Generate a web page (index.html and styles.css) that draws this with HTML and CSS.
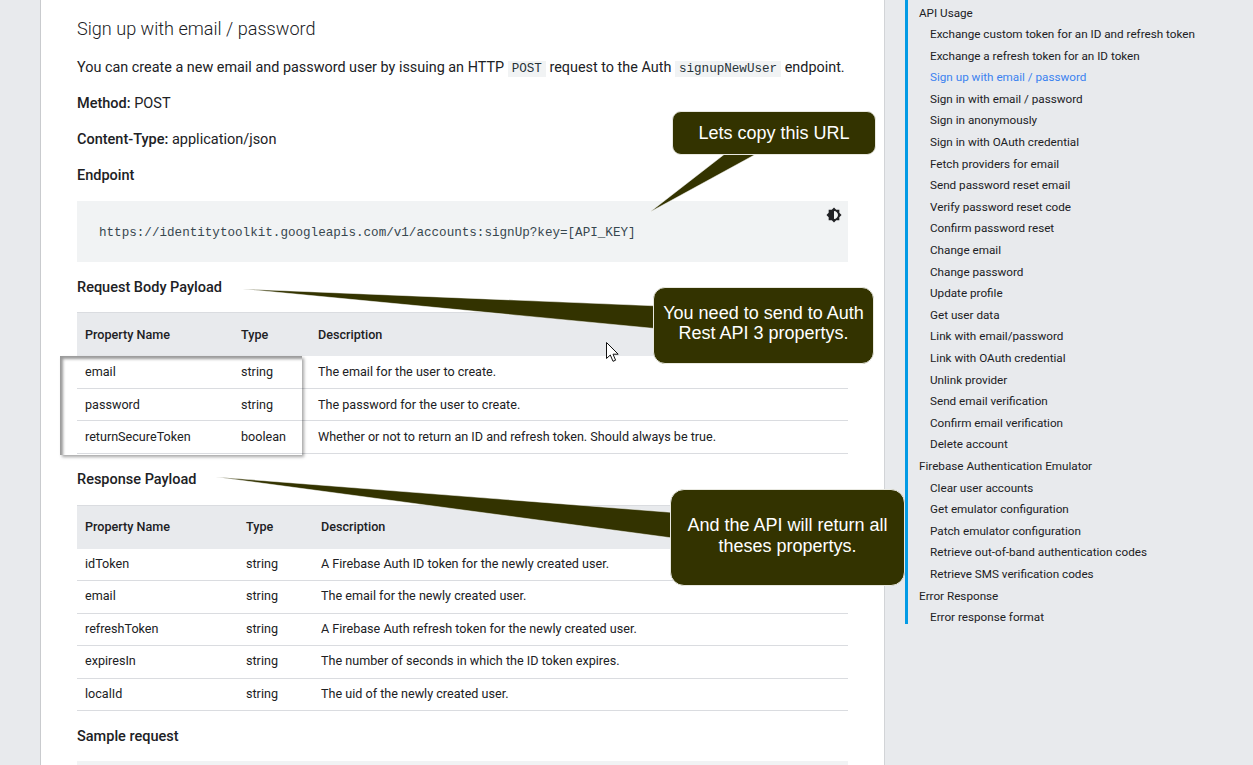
FILE: index.html
```html
<!DOCTYPE html>
<html lang="en">
<head>
  <meta charset="UTF-8" />
  <meta name="viewport" content="width=device-width, initial-scale=1.0" />
  <title>Firebase Auth REST API</title>
  <link rel="stylesheet" href="styles.css">
</head>
<body>
  <div class="page">
    <main class="card">
      <h3>Sign up with email / password</h3>
      <p class="intro">You can create a new email and password user by issuing an HTTP <code>POST</code> request to the Auth <code>signupNewUser</code> endpoint.</p>
      <p class="method"><b>Method:</b> POST</p>
      <p><b>Content-Type:</b> application/json</p>
      <p><b>Endpoint</b></p>
      <div class="code-block">
        <pre>https://identitytoolkit.googleapis.com/v1/accounts:signUp?key=[API_KEY]</pre>
        <svg class="theme-icon" viewBox="0 0 24 24"><path d="M20 15.31L23.31 12 20 8.69V4h-4.69L12 .69 8.69 4H4v4.69L.69 12 4 15.31V20h4.69L12 23.31 15.31 20H20v-4.69zM12 18V6c3.31 0 6 2.69 6 6s-2.69 6-6 6z"/></svg>
      </div>
      <p class="label"><b>Request Body Payload</b></p>
      <table class="request">
        <thead>
          <tr><th class="col-name">Property Name</th><th class="col-type">Type</th><th>Description</th></tr>
        </thead>
        <tbody>
          <tr><td>email</td><td>string</td><td>The email for the user to create.</td></tr>
          <tr><td>password</td><td>string</td><td>The password for the user to create.</td></tr>
          <tr><td>returnSecureToken</td><td>boolean</td><td>Whether or not to return an ID and refresh token. Should always be true.</td></tr>
        </tbody>
      </table>
      <p class="label"><b>Response Payload</b></p>
      <table class="response">
        <thead>
          <tr><th class="col-name">Property Name</th><th class="col-type">Type</th><th>Description</th></tr>
        </thead>
        <tbody>
          <tr><td>idToken</td><td>string</td><td>A Firebase Auth ID token for the newly created user.</td></tr>
          <tr><td>email</td><td>string</td><td>The email for the newly created user.</td></tr>
          <tr><td>refreshToken</td><td>string</td><td>A Firebase Auth refresh token for the newly created user.</td></tr>
          <tr><td>expiresIn</td><td>string</td><td>The number of seconds in which the ID token expires.</td></tr>
          <tr><td>localId</td><td>string</td><td>The uid of the newly created user.</td></tr>
        </tbody>
      </table>
      <p class="label"><b>Sample request</b></p>
      <div class="code-block sample"></div>
    </main>

    <nav class="toc">
      <a class="top">API Usage</a>
      <a>Exchange custom token for an ID and refresh token</a>
      <a>Exchange a refresh token for an ID token</a>
      <a class="current">Sign up with email / password</a>
      <a>Sign in with email / password</a>
      <a>Sign in anonymously</a>
      <a>Sign in with OAuth credential</a>
      <a>Fetch providers for email</a>
      <a>Send password reset email</a>
      <a>Verify password reset code</a>
      <a>Confirm password reset</a>
      <a>Change email</a>
      <a>Change password</a>
      <a>Update profile</a>
      <a>Get user data</a>
      <a>Link with email/password</a>
      <a>Link with OAuth credential</a>
      <a>Unlink provider</a>
      <a>Send email verification</a>
      <a>Confirm email verification</a>
      <a>Delete account</a>
      <a class="top">Firebase Authentication Emulator</a>
      <a>Clear user accounts</a>
      <a>Get emulator configuration</a>
      <a>Patch emulator configuration</a>
      <a>Retrieve out-of-band authentication codes</a>
      <a>Retrieve SMS verification codes</a>
      <a class="top">Error Response</a>
      <a>Error response format</a>
    </nav>
  </div>

  <!-- annotations drawn on top of the screenshot -->
  <div class="highlight"></div>
  <svg class="tails" viewBox="0 0 1253 765">
    <path d="M726 153 L758 153 L650 212 Z"/>
    <path d="M660 306 L243 289 L660 329 Z"/>
    <path d="M680 513 L216 477 L680 539 Z"/>
  </svg>
  <div class="callout c1">Lets copy this URL</div>
  <div class="callout c2">You need to send to Auth Rest API 3 propertys.</div>
  <div class="callout c3">And the API will return all theses propertys.</div>
  <svg class="cursor" viewBox="0 0 13 20"><path d="M.5.5V16.5L4.3 13 7 19.3 9.6 18.2 7 12.2H12.2Z"/></svg>
</body>
</html>
```

FILE: styles.css
```css
html, body {
  margin: 0;
  height: 765px;
  overflow: hidden;
}
body {
  position: relative;
  background: #e8eaed;
  color: #202124;
  font-family: Roboto, sans-serif;
  font-size: 14.4px;
}
.page {
  display: flex;
  align-items: flex-start;
}
.card {
  box-sizing: border-box;
  width: 845px;
  height: 765px;
  margin-left: 40px;
  padding: 0 36px;
  background: white;
  border-left: 1px solid #c9cbce;
  border-right: 1px solid #d2d4d7;
  overflow: hidden;
}
h3 {
  margin: 16px 0 0;
  font-size: 18.1px;
  line-height: 26px;
  font-weight: 300;
}
p {
  margin: 14px 0 0;
  font-size: 14.5px;
  line-height: 22px;
}
.intro {
  margin-top: 15px;
  font-size: 14.4px;
}
.method {
  margin-top: 13px;
}
b {
  font-weight: 500;
}
code {
  padding: 1px 4px;
  background: #f1f3f4;
  font-family: "Liberation Mono", monospace;
  font-size: 12.6px;
  color: #263238;
}
.code-block {
  position: relative;
  height: 61px;
  margin-top: 14px;
  background: #f1f3f4;
}
pre {
  margin: 0;
  padding: 23px 22px 0;
  font-family: "Liberation Mono", monospace;
  font-size: 12.6px;
  line-height: 18px;
  color: #37474f;
}
.theme-icon {
  position: absolute;
  top: 6px;
  right: 6px;
  width: 16px;
  height: 16px;
  fill: #202124;
}
.label {
  margin-top: 15px;
}
table {
  width: 100%;
  margin-top: 13px;
  border-collapse: collapse;
  table-layout: fixed;
  font-size: 12.6px;
}
th {
  height: 43px;
  padding: 0 8px;
  background: #e8eaed;
  border-top: 1px solid #dadce0;
  text-align: left;
  font-weight: 500;
}
td {
  height: 31.5px;
  padding: 0 8px;
  border-bottom: 1px solid #dadce0;
}
.response {
  margin-top: 14px;
}
.response th {
  height: 41px;
  padding-bottom: 2px;
}
.response td {
  height: 29.5px;
  padding-bottom: 2px;
}
.request .col-name { width: 140px; }
.request .col-type { width: 61px; }
.response .col-name { width: 145px; }
.response .col-type { width: 59px; }
.sample {
  height: 40px;
  margin-top: 13px;
}
.toc {
  box-sizing: border-box;
  height: 624px;
  margin-left: 20px;
  padding-top: 2.5px;
  border-left: 3px solid #039be5;
  font-size: 11.7px;
  line-height: 21.6px;
}
.toc a {
  display: block;
  padding-left: 22px;
  color: #202124;
  white-space: nowrap;
}
.toc .top {
  padding-left: 11px;
}
.toc .current {
  color: #3b82f0;
}
.highlight {
  position: absolute;
  left: 60px;
  top: 356px;
  width: 242px;
  height: 99px;
  box-shadow: inset 4px 4px 3px -1px rgba(0, 0, 0, 0.4), 2px 2px 3px rgba(0, 0, 0, 0.35);
  background: linear-gradient(white, white) left / 17px 100% no-repeat;
}
.tails {
  position: absolute;
  left: 0;
  top: 0;
  width: 1253px;
  height: 765px;
  fill: #333300;
  stroke: white;
  stroke-width: 0.5;
}
.callout {
  position: absolute;
  box-sizing: border-box;
  display: flex;
  align-items: center;
  justify-content: center;
  padding: 0 6px;
  background: #333300;
  border: 1px solid #e8e8e0;
  border-radius: 9px;
  color: white;
  font-family: "Liberation Sans", sans-serif;
  font-size: 18px;
  line-height: 20.5px;
  text-align: center;
}
.c1 { left: 672px; top: 111px; width: 204px; height: 44px; }
.c2 { left: 653px; top: 287px; width: 221px; height: 77px; padding-bottom: 5px; border-radius: 12px; }
.c3 { left: 670px; top: 489px; width: 235px; height: 97px; padding-bottom: 4px; border-radius: 14px; }
.cursor {
  position: absolute;
  left: 606px;
  top: 342px;
  width: 13px;
  height: 20px;
  fill: white;
  stroke: #111;
  stroke-width: 1;
}
```
